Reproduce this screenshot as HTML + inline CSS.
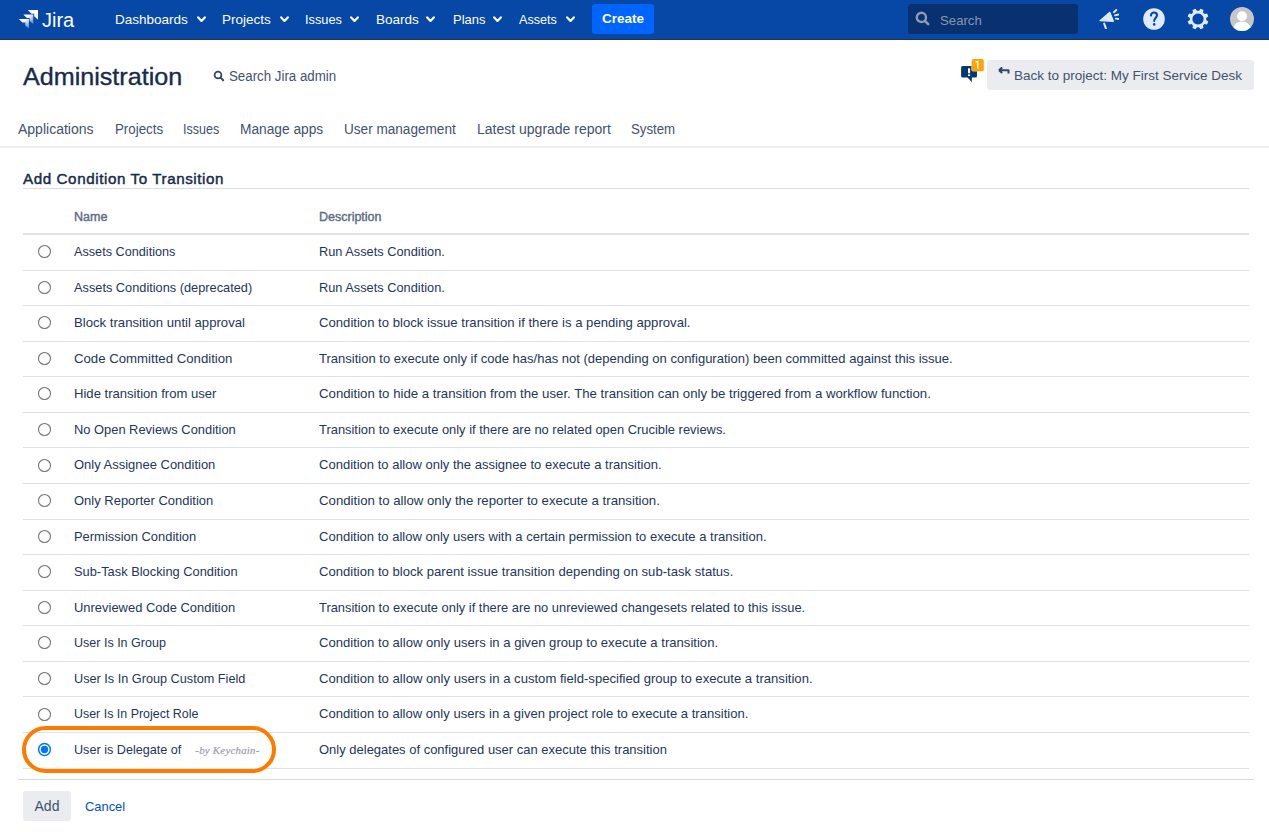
<!DOCTYPE html>
<html><head><meta charset="utf-8">
<style>
*{box-sizing:border-box;margin:0;padding:0}
html,body{width:1269px;height:832px;overflow:hidden;background:#fff;font-family:"Liberation Sans",sans-serif;color:#172b4d}
.abs{position:absolute;white-space:nowrap}
#hdr{position:absolute;left:0;top:0;width:1269px;height:40px;background:#0747a6;border-bottom:1px solid #25324d}
.nav{position:absolute;transform-origin:0 0;white-space:nowrap;top:12px;color:#fff;font-size:13.5px;line-height:16px}
.chev{position:absolute;top:15.5px;width:9px;height:7px}
#create{position:absolute;left:592px;top:4px;width:62px;height:30px;background:#0065ff;border-radius:3px;color:#fff;font-weight:bold;font-size:13.5px;line-height:30px;text-align:center}
#search{position:absolute;left:908px;top:4px;width:170px;height:30px;background:#093172;border-radius:3px}
#search span{position:absolute;left:32px;top:9px;font-size:13.2px;color:#8796b0;line-height:16px}
h1{position:absolute;left:23px;top:63px;font-size:24.4px;font-weight:normal;line-height:28px;color:#172b4d;-webkit-text-stroke:0.35px #172b4d;transform:scaleX(1.03);transform-origin:0 0;white-space:nowrap}
.tab{position:absolute;transform-origin:0 0;white-space:nowrap;top:121px;font-size:14px;line-height:16px;color:#42526e}
#tabline{position:absolute;left:0;top:146px;width:1269px;height:2px;background:#ebecf0}
h2{position:absolute;left:23px;top:170px;font-size:15.2px;font-weight:normal;-webkit-text-stroke:0.45px #172b4d;letter-spacing:0.58px;line-height:18px;color:#172b4d;white-space:nowrap}
#h2line{position:absolute;left:23px;top:188px;width:1226px;height:1px;background:#dcdcdc}
.th{position:absolute;top:210px;font-size:12.5px;font-weight:normal;-webkit-text-stroke:0.4px #5e6c84;color:#5e6c84;line-height:14px}
#thline{position:absolute;left:23px;top:233px;width:1226px;height:2px;background:#dfe1e6}
.row{position:absolute;left:23px;width:1226px;border-bottom:1px solid #dfe1e6}
.row .r{position:absolute;left:13.6px}
.row .n{position:absolute;left:51px;transform-origin:0 0;font-size:12.8px;line-height:16px;color:#24365a;white-space:nowrap}
.row .d{position:absolute;left:296px;transform-origin:0 0;font-size:12.8px;line-height:16px;color:#24365a;white-space:nowrap}
.kc{position:absolute;left:123px;top:0px;font-family:"Liberation Serif",serif;font-style:italic;font-size:11px;letter-spacing:0.25px;color:#9c9cac;-webkit-text-stroke:0.2px #9c9cac}
#ellipse{position:absolute;left:22px;top:726px;width:254px;height:46.6px;border:4.4px solid #ff7b00;border-radius:24px}
#btmline{position:absolute;left:18px;top:779px;width:1236px;height:1px;background:#d9d9d9}
#add{position:absolute;left:23px;top:791px;width:48px;height:30px;background:#ebecf0;border-radius:3px;font-size:14px;line-height:30px;text-align:center;color:#42526e}
#cancel{position:absolute;left:85px;top:799px;font-size:13.3px;transform:scaleX(0.97);transform-origin:0 0;line-height:16px;color:#0052cc}
#back{position:absolute;left:987px;top:60px;width:267px;height:30px;background:#ebecf0;border-radius:3px}
#back span{position:absolute;left:27px;top:7.5px;font-size:13.5px;line-height:16px;color:#42526e;white-space:nowrap}
</style></head>
<body>
<div id="hdr">
  <svg width="60" height="30" viewBox="0 0 60 30" style="position:absolute;left:15px;top:5px">
    <defs>
      <linearGradient id="g1" x1="0" y1="0" x2="1" y2="1"><stop offset="0.35" stop-color="#fff"/><stop offset="1" stop-color="#fff" stop-opacity="0.25"/></linearGradient>
    </defs>
    <path d="M12.8 5 L23 5 L23 14.8 L19.2 11.2 L19.2 8.7 L16.5 8.7 Z" fill="#fff"/>
    <path d="M8.3 9.4 L18.3 9.4 L18.3 19.2 L14.6 15.8 L14.6 13.1 L11.9 13.1 Z" fill="url(#g1)"/>
    <path d="M3.8 14 L14 14 L14 23.8 L10.3 20.3 L10.3 17.6 L7.5 17.6 Z" fill="url(#g1)"/>
  </svg>
  <div class="abs" style="left:42px;top:8px;color:#fff;font-size:20px;line-height:24px;letter-spacing:0px">Jira</div>
  <div class="nav" style="left:115px">Dashboards</div>
  <svg class="chev" style="left:197px" viewBox="0 0 9 7"><path d="M1.2 1.4 L4.5 4.9 L7.8 1.4" stroke="#fff" stroke-width="2.2" fill="none" stroke-linecap="round" stroke-linejoin="round"/></svg>
  <div class="nav" style="left:222px">Projects</div>
  <svg class="chev" style="left:280px" viewBox="0 0 9 7"><path d="M1.2 1.4 L4.5 4.9 L7.8 1.4" stroke="#fff" stroke-width="2.2" fill="none" stroke-linecap="round" stroke-linejoin="round"/></svg>
  <div class="nav" style="left:305px;transform:scaleX(0.947)">Issues</div>
  <svg class="chev" style="left:350px" viewBox="0 0 9 7"><path d="M1.2 1.4 L4.5 4.9 L7.8 1.4" stroke="#fff" stroke-width="2.2" fill="none" stroke-linecap="round" stroke-linejoin="round"/></svg>
  <div class="nav" style="left:376px">Boards</div>
  <svg class="chev" style="left:426px" viewBox="0 0 9 7"><path d="M1.2 1.4 L4.5 4.9 L7.8 1.4" stroke="#fff" stroke-width="2.2" fill="none" stroke-linecap="round" stroke-linejoin="round"/></svg>
  <div class="nav" style="left:452.5px;transform:scaleX(0.96)">Plans</div>
  <svg class="chev" style="left:493px" viewBox="0 0 9 7"><path d="M1.2 1.4 L4.5 4.9 L7.8 1.4" stroke="#fff" stroke-width="2.2" fill="none" stroke-linecap="round" stroke-linejoin="round"/></svg>
  <div class="nav" style="left:518.5px;transform:scaleX(0.935)">Assets</div>
  <svg class="chev" style="left:566px" viewBox="0 0 9 7"><path d="M1.2 1.4 L4.5 4.9 L7.8 1.4" stroke="#fff" stroke-width="2.2" fill="none" stroke-linecap="round" stroke-linejoin="round"/></svg>
  <div id="create">Create</div>
  <div id="search">
    <svg width="16" height="16" viewBox="0 0 16 16" style="position:absolute;left:7px;top:7px"><circle cx="6.4" cy="6.4" r="4.6" stroke="#8a9bb5" stroke-width="2.4" fill="none"/><path d="M9.8 9.8 L13.2 13.2" stroke="#8a9bb5" stroke-width="2.6" stroke-linecap="round"/></svg>
    <span>Search</span>
  </div>
  <svg width="24" height="24" viewBox="0 0 24 24" style="position:absolute;left:1095px;top:5px">
    <path d="M5 15.6 L14.8 7.3 L18.4 16.3 Z" fill="#deebff" stroke="#deebff" stroke-width="1.2" stroke-linejoin="round"/>
    <path d="M9.2 18.6 L10.9 23.4" stroke="#deebff" stroke-width="2" stroke-linecap="round"/>
    <path d="M18.9 7.2 L21.3 5 M20 10.3 L23.4 9.5 M20.8 13.6 L25 14.1" stroke="#deebff" stroke-width="1.9" stroke-linecap="round"/>
  </svg>
  <svg width="24" height="24" viewBox="0 0 24 24" style="position:absolute;left:1142px;top:7px">
    <circle cx="12" cy="12" r="10.8" fill="#deebff"/>
    <path d="M9 8.6 C9 6.3 10.5 5.5 12 5.5 C13.7 5.5 15 6.5 15 8.3 C15 10.6 12.2 10.9 12.2 13.9" stroke="#0747a6" stroke-width="2.1" fill="none" stroke-linecap="round"/>
    <circle cx="12.2" cy="17.4" r="1.3" fill="#0747a6"/>
  </svg>
  <svg width="24" height="24" viewBox="0 0 24 24" style="position:absolute;left:1186px;top:7px">
    <path fill="#deebff" fill-rule="evenodd" d="M13.07 3.87 L14.47 1.69 L17.54 2.96 L16.99 5.49 L18.51 7.01 L21.04 6.46 L22.31 9.53 L20.13 10.93 L20.13 13.07 L22.31 14.47 L21.04 17.54 L18.51 16.99 L16.99 18.51 L17.54 21.04 L14.47 22.31 L13.07 20.13 L10.93 20.13 L9.53 22.31 L6.46 21.04 L7.01 18.51 L5.49 16.99 L2.96 17.54 L1.69 14.47 L3.87 13.07 L3.87 10.93 L1.69 9.53 L2.96 6.46 L5.49 7.01 L7.01 5.49 L6.46 2.96 L9.53 1.69 L10.93 3.87Z M12 6.4 A5.6 5.6 0 1 0 12.001 6.4 Z"/>
  </svg>
  <svg width="26" height="26" viewBox="0 0 26 26" style="position:absolute;left:1229px;top:6px">
    <defs><clipPath id="av"><circle cx="13" cy="12.9" r="12"/></clipPath></defs>
    <circle cx="13" cy="12.9" r="12" fill="#c6c6c6"/>
    <g clip-path="url(#av)" fill="#fff"><circle cx="13" cy="10.2" r="5"/><path d="M3 26 C4 19 8 15.6 13 15.6 C18 15.6 22 19 23 26 Z"/></g>
  </svg>
</div>
<h1>Administration</h1>
<svg width="12" height="12" viewBox="0 0 12 12" style="position:absolute;left:213px;top:70px"><circle cx="5" cy="5" r="3.4" stroke="#344563" stroke-width="1.8" fill="none"/><path d="M7.6 7.6 L10.2 10.2" stroke="#344563" stroke-width="2" stroke-linecap="round"/></svg>
<div class="abs" style="left:229px;top:67.5px;font-size:14px;line-height:16px;color:#42526e;transform:scaleX(0.95);transform-origin:0 0">Search Jira admin</div>
<svg width="26" height="28" viewBox="0 0 26 28" style="position:absolute;left:959px;top:57px">
  <rect x="2.1" y="9" width="15.9" height="11.5" rx="1.6" fill="#063770"/>
  <path d="M8.3 20 L12.9 20 L12.8 25.2 Z" fill="#063770"/>
  <rect x="9" y="11.3" width="2.1" height="5" fill="#fff"/><rect x="9" y="17.4" width="2.1" height="1.6" fill="#fff"/>
  <rect x="12.2" y="1.6" width="13" height="13" rx="2.2" fill="#fff" opacity="0.6"/>
  <rect x="12.6" y="2" width="12.2" height="12.2" rx="2" fill="#ffa400"/>
  <path d="M16.6 5.2 L18.8 4.4 V11.8" stroke="#fff" stroke-width="1.4" fill="none"/>
</svg>
<div id="back">
  <svg width="12" height="8" viewBox="0 0 12 8" style="position:absolute;left:11px;top:7px"><path d="M1 3.2 L4.2 0.4 M1 3.2 L4.2 6 M1 3.2 H10.5 V6.5" stroke="#344563" stroke-width="2" fill="none" stroke-linejoin="round"/></svg>
  <span>Back to project: My First Service Desk</span>
</div>
<div class="tab" style="left:18px">Applications</div>
<div class="tab" style="left:114.5px;transform:scaleX(0.95)">Projects</div>
<div class="tab" style="left:183px;transform:scaleX(0.893)">Issues</div>
<div class="tab" style="left:240px;transform:scaleX(0.98)">Manage apps</div>
<div class="tab" style="left:343.5px;transform:scaleX(0.97)">User management</div>
<div class="tab" style="left:477px">Latest upgrade report</div>
<div class="tab" style="left:631px;transform:scaleX(0.945)">System</div>
<div id="tabline"></div>
<h2>Add Condition To Transition</h2>
<div id="h2line"></div>
<div class="th" style="left:74px">Name</div>
<div class="th" style="left:319px">Description</div>
<div id="thline"></div>
<!--ROWS--><div id="rows">
<div class="row" style="top:235px;height:36px"><svg style="top:9.10px" class="r" width="15" height="15" viewBox="0 0 15 15"><circle cx="7.5" cy="7.5" r="6" fill="#fff" stroke="#767676" stroke-width="1.1"/></svg><div class="n" style="top:9.00px;transform:scaleX(0.9902)">Assets Conditions</div><div class="d" style="top:9.00px;transform:scaleX(0.9992)">Run Assets Condition.</div></div>
<div class="row" style="top:271px;height:35px"><svg style="top:8.67px" class="r" width="15" height="15" viewBox="0 0 15 15"><circle cx="7.5" cy="7.5" r="6" fill="#fff" stroke="#767676" stroke-width="1.1"/></svg><div class="n" style="top:8.57px;transform:scaleX(0.9978)">Assets Conditions (deprecated)</div><div class="d" style="top:8.57px;transform:scaleX(0.9992)">Run Assets Condition.</div></div>
<div class="row" style="top:306px;height:36px"><svg style="top:9.24px" class="r" width="15" height="15" viewBox="0 0 15 15"><circle cx="7.5" cy="7.5" r="6" fill="#fff" stroke="#767676" stroke-width="1.1"/></svg><div class="n" style="top:9.14px;transform:scaleX(1.0271)">Block transition until approval</div><div class="d" style="top:9.14px;transform:scaleX(1.0260)">Condition to block issue transition if there is a pending approval.</div></div>
<div class="row" style="top:342px;height:35px"><svg style="top:8.81px" class="r" width="15" height="15" viewBox="0 0 15 15"><circle cx="7.5" cy="7.5" r="6" fill="#fff" stroke="#767676" stroke-width="1.1"/></svg><div class="n" style="top:8.71px;transform:scaleX(1.0314)">Code Committed Condition</div><div class="d" style="top:8.71px;transform:scaleX(1.0177)">Transition to execute only if code has/has not (depending on configuration) been committed against this issue.</div></div>
<div class="row" style="top:377px;height:36px"><svg style="top:9.38px" class="r" width="15" height="15" viewBox="0 0 15 15"><circle cx="7.5" cy="7.5" r="6" fill="#fff" stroke="#767676" stroke-width="1.1"/></svg><div class="n" style="top:9.28px;transform:scaleX(1.0221)">Hide transition from user</div><div class="d" style="top:9.28px;transform:scaleX(1.0318)">Condition to hide a transition from the user. The transition can only be triggered from a workflow function.</div></div>
<div class="row" style="top:413px;height:35px"><svg style="top:8.95px" class="r" width="15" height="15" viewBox="0 0 15 15"><circle cx="7.5" cy="7.5" r="6" fill="#fff" stroke="#767676" stroke-width="1.1"/></svg><div class="n" style="top:8.85px;transform:scaleX(1.0063)">No Open Reviews Condition</div><div class="d" style="top:8.85px;transform:scaleX(1.0084)">Transition to execute only if there are no related open Crucible reviews.</div></div>
<div class="row" style="top:448px;height:36px"><svg style="top:9.52px" class="r" width="15" height="15" viewBox="0 0 15 15"><circle cx="7.5" cy="7.5" r="6" fill="#fff" stroke="#767676" stroke-width="1.1"/></svg><div class="n" style="top:9.42px;transform:scaleX(1.0137)">Only Assignee Condition</div><div class="d" style="top:9.42px;transform:scaleX(1.0179)">Condition to allow only the assignee to execute a transition.</div></div>
<div class="row" style="top:484px;height:36px"><svg style="top:9.09px" class="r" width="15" height="15" viewBox="0 0 15 15"><circle cx="7.5" cy="7.5" r="6" fill="#fff" stroke="#767676" stroke-width="1.1"/></svg><div class="n" style="top:8.99px;transform:scaleX(1.0146)">Only Reporter Condition</div><div class="d" style="top:8.99px;transform:scaleX(1.0328)">Condition to allow only the reporter to execute a transition.</div></div>
<div class="row" style="top:520px;height:35px"><svg style="top:8.66px" class="r" width="15" height="15" viewBox="0 0 15 15"><circle cx="7.5" cy="7.5" r="6" fill="#fff" stroke="#767676" stroke-width="1.1"/></svg><div class="n" style="top:8.56px;transform:scaleX(1.0100)">Permission Condition</div><div class="d" style="top:8.56px;transform:scaleX(1.0182)">Condition to allow only users with a certain permission to execute a transition.</div></div>
<div class="row" style="top:555px;height:36px"><svg style="top:9.23px" class="r" width="15" height="15" viewBox="0 0 15 15"><circle cx="7.5" cy="7.5" r="6" fill="#fff" stroke="#767676" stroke-width="1.1"/></svg><div class="n" style="top:9.13px;transform:scaleX(1.0043)">Sub-Task Blocking Condition</div><div class="d" style="top:9.13px;transform:scaleX(1.0235)">Condition to block parent issue transition depending on sub-task status.</div></div>
<div class="row" style="top:591px;height:35px"><svg style="top:8.80px" class="r" width="15" height="15" viewBox="0 0 15 15"><circle cx="7.5" cy="7.5" r="6" fill="#fff" stroke="#767676" stroke-width="1.1"/></svg><div class="n" style="top:8.70px;transform:scaleX(1.0113)">Unreviewed Code Condition</div><div class="d" style="top:8.70px;transform:scaleX(1.0060)">Transition to execute only if there are no unreviewed changesets related to this issue.</div></div>
<div class="row" style="top:626px;height:36px"><svg style="top:9.37px" class="r" width="15" height="15" viewBox="0 0 15 15"><circle cx="7.5" cy="7.5" r="6" fill="#fff" stroke="#767676" stroke-width="1.1"/></svg><div class="n" style="top:9.27px;transform:scaleX(0.9787)">User Is In Group</div><div class="d" style="top:9.27px;transform:scaleX(1.0237)">Condition to allow only users in a given group to execute a transition.</div></div>
<div class="row" style="top:662px;height:35px"><svg style="top:8.94px" class="r" width="15" height="15" viewBox="0 0 15 15"><circle cx="7.5" cy="7.5" r="6" fill="#fff" stroke="#767676" stroke-width="1.1"/></svg><div class="n" style="top:8.84px;transform:scaleX(0.9913)">User Is In Group Custom Field</div><div class="d" style="top:8.84px;transform:scaleX(1.0234)">Condition to allow only users in a custom field-specified group to execute a transition.</div></div>
<div class="row" style="top:697px;height:36px"><svg style="top:9.51px" class="r" width="15" height="15" viewBox="0 0 15 15"><circle cx="7.5" cy="7.5" r="6" fill="#fff" stroke="#767676" stroke-width="1.1"/></svg><div class="n" style="top:9.41px;transform:scaleX(0.9719)">User Is In Project Role</div><div class="d" style="top:9.41px;transform:scaleX(1.0214)">Condition to allow only users in a given project role to execute a transition.</div></div>
<div class="row" style="top:733px;height:36px"><svg style="top:9.08px" class="r" width="15" height="15" viewBox="0 0 15 15"><circle cx="7.5" cy="7.5" r="5.9" fill="#fff" stroke="#0075ff" stroke-width="1.5"/><circle cx="7.5" cy="7.5" r="3.7" fill="#0075ff"/></svg><div class="n" style="top:8.98px;transform:scaleX(0.9862)">User is Delegate of<span class="kc">-by Keychain-</span></div><div class="d" style="top:8.98px;transform:scaleX(1.0146)">Only delegates of configured user can execute this transition</div></div>
</div><!--/ROWS-->
<div id="ellipse"></div>
<div id="btmline"></div>
<div id="add">Add</div>
<div id="cancel">Cancel</div>
</body></html>
